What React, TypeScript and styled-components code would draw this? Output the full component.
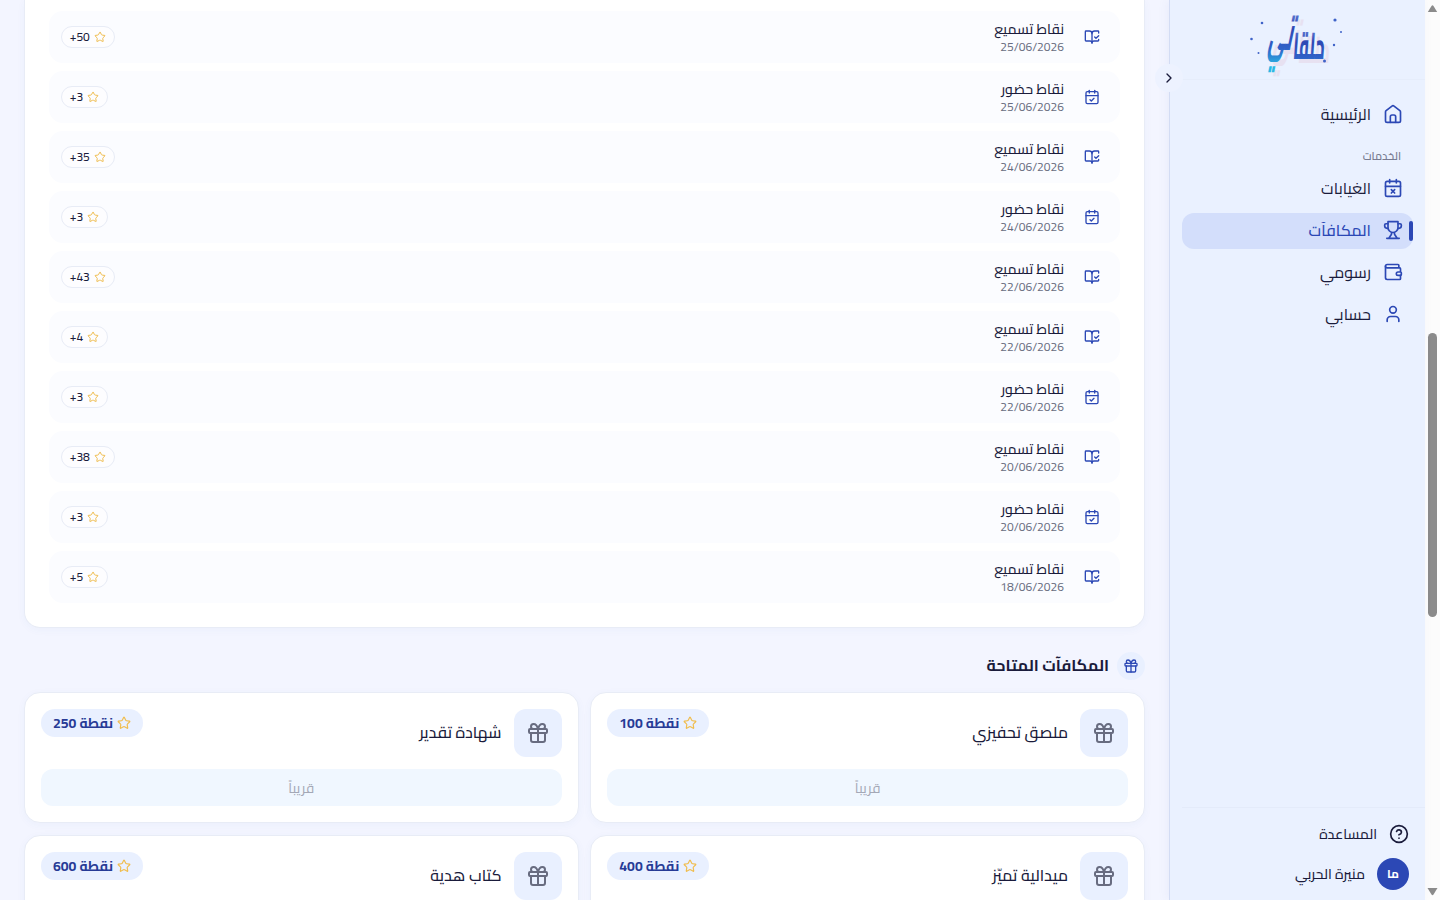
import React from 'react';
import styled, { createGlobalStyle } from 'styled-components';
import {
  BookOpenCheck, CalendarCheck, CalendarX, ChevronRight, CircleHelp, Gift, Star, User, Wallet,
} from 'lucide-react';

const ink = '#1a1b3b';
const primary = '#2c48b5';
const line = '#e8ecf6';

const GlobalStyle = createGlobalStyle`
  * { box-sizing: border-box; }
  body {
    margin: 0;
    overflow: hidden;
    color: ${ink};
    background: #f3f5ff;
    font-family: Cairo, "Noto Sans", "DejaVu Sans", sans-serif;
  }
`;

const Page = styled.div`
  display: flex;
  width: 1440px;
  height: 900px;
  overflow: hidden;
  white-space: nowrap;
`;

const Main = styled.main`
  width: 1169px;
  padding: 0 24px;
`;

const HistoryCard = styled.section`
  height: 628px;
  padding: 11px 24px 24px;
  display: flex;
  flex-direction: column;
  gap: 8px;
  background: #fff;
  border: 1px solid ${line};
  border-top: 0;
  border-radius: 0 0 16px 16px;
  box-shadow: 0 2px 8px rgba(60, 90, 180, 0.04);
`;

const HistoryRow = styled.div`
  height: 52px;
  flex: none;
  padding: 0 12px;
  display: flex;
  align-items: center;
  gap: 12px;
  border-radius: 14px;
  background: #fbfcff;
`;

const RowIcon = styled.span`
  width: 32px;
  height: 32px;
  display: grid;
  place-items: center;
  color: ${primary};
`;

const RowText = styled.div`
  flex: 1;
  display: flex;
  flex-direction: column;
`;

const RowTitle = styled.div`
  font-size: 14px;
  line-height: 19px;
  font-weight: 500;
`;

const RowDate = styled.div`
  font-size: 12px;
  line-height: 16px;
  color: #686c80;
`;

const PointsPill = styled.span`
  height: 22px;
  padding: 0 7.7px;
  display: flex;
  align-items: center;
  gap: 4px;
  border: 1px solid ${line};
  border-radius: 11px;
  font-size: 12px;
  line-height: 20px;
  font-weight: 500;
  background: #fdfdff;
  svg { color: #f0bd4e; }
`;

const SectionHeader = styled.header`
  height: 28px;
  margin: 24px 0 12px;
  display: flex;
  align-items: center;
  gap: 8px;
`;

const SectionIcon = styled.span`
  width: 28px;
  height: 28px;
  display: grid;
  place-items: center;
  border-radius: 50%;
  color: ${primary};
  background: #e9f0ff;
`;

const SectionTitle = styled.h2`
  margin: 0 0 2px;
  font-size: 16px;
  line-height: 26px;
  font-weight: 700;
`;

const RewardGrid = styled.section`
  display: grid;
  grid-template-columns: 554.7px 554.5px;
  gap: 12px 11.8px;
`;

const RewardCard = styled.article`
  height: 131.4px;
  padding: 16px;
  border: 1px solid ${line};
  border-radius: 16px;
  background: #fff;
  box-shadow: 0 2px 8px rgba(60, 90, 180, 0.04);
`;

const RewardTop = styled.div`
  height: 48px;
  display: flex;
  align-items: flex-start;
  gap: 12px;
`;

const RewardIcon = styled.span`
  width: 48px;
  height: 48px;
  display: grid;
  place-items: center;
  border-radius: 12px;
  color: #686c80;
  background: #e9f0ff;
`;

const RewardName = styled.div`
  flex: 1;
  font-size: 16px;
  line-height: 47.4px;
  font-weight: 500;
`;

const CostPill = styled.span`
  height: 28px;
  padding: 0 12px;
  display: flex;
  align-items: center;
  gap: 3.5px;
  border-radius: 14px;
  font-size: 14px;
  line-height: 28px;
  font-weight: 700;
  color: #273b96;
  background: #e9f0ff;
  svg {
    margin-bottom: 1px;
    color: #f0bd4e;
  }
`;

const SoonButton = styled.button`
  width: 100%;
  height: 37.4px;
  margin-top: 12px;
  padding: 0;
  border: 0;
  border-radius: 12px;
  font: inherit;
  font-size: 14px;
  color: #a4a8b6;
  background: #f0f7ff;
`;

const Sidebar = styled.aside`
  position: relative;
  width: 256px;
  display: flex;
  flex-direction: column;
  border-left: 1px solid #d3dcf4;
  background: #eaf1ff;
  box-shadow: -2px 0 10px rgba(60, 90, 180, 0.06);
`;

const Brand = styled.div`
  height: 80px;
  margin-left: 12px;
  padding-right: 75px;
  border-bottom: 1px solid #e6edfb;
`;

const Toggle = styled.button`
  position: absolute;
  left: -15px;
  top: 64px;
  width: 28px;
  height: 28px;
  padding: 0;
  display: grid;
  place-items: center;
  border: 0;
  border-radius: 50%;
  color: ${ink};
  background: #edf2ff;
`;

const Nav = styled.nav`
  flex: 1;
  padding: 16px 12px;
  display: flex;
  flex-direction: column;
  gap: 6px;
`;

const NavItem = styled.a<{ $active?: boolean }>`
  position: relative;
  height: 36px;
  padding: 0 10px 1px;
  display: flex;
  align-items: center;
  gap: 12px;
  border-radius: 12px;
  font-size: 16px;
  font-weight: ${(p) => (p.$active ? 500 : 400)};
  color: ${(p) => (p.$active ? primary : ink)};
  background: ${(p) => (p.$active ? '#d3defb' : 'transparent')};
  svg { color: ${primary}; }
  &:first-child { padding-bottom: 0; }
`;

const ActiveMark = styled.span`
  position: absolute;
  right: 0;
  top: 8px;
  width: 4px;
  height: 20px;
  border-radius: 2px;
  background: ${primary};
`;

const NavHeading = styled.div`
  height: 26.5px;
  padding: 0 12px;
  font-size: 11px;
  line-height: 37px;
  font-weight: 600;
  color: #777b90;
`;

const SideFooter = styled.footer`
  height: 93px;
  margin-left: 12px;
  padding: 10px 16px;
  display: flex;
  flex-direction: column;
  gap: 8px;
  border-top: 1px solid #e4ebfa;
  font-size: 14px;
`;

const FooterItem = styled.div`
  flex: none;
  height: 32px;
  display: flex;
  align-items: center;
  gap: 12px;
  font-weight: 500;
`;

const Avatar = styled.span`
  width: 32px;
  height: 32px;
  display: grid;
  place-items: center;
  border-radius: 50%;
  font-size: 12px;
  line-height: 16px;
  font-weight: 700;
  color: #fff;
  background: ${primary};
`;

const Scrollbar = styled.div`
  width: 15px;
  display: flex;
  flex-direction: column;
  align-items: center;
  background: #fcfcfc;
`;

const ScrollThumb = styled.div`
  width: 9px;
  height: 284px;
  margin: 321px 0 267px;
  border-radius: 5px;
  background: #8b8b8b;
`;

const LineIcon = styled.svg.attrs({
  width: 20,
  height: 20,
  viewBox: '0 0 24 24',
  fill: 'none',
  stroke: 'currentColor',
  strokeWidth: 2,
  strokeLinecap: 'round',
  strokeLinejoin: 'round',
})``;

const HomeIcon = () => (
  <LineIcon>
    <path d="M3 9.600a2 2 0 0 1 .75-1.560l7-5.500a2 2 0 0 1 2.500 0l7 5.500A2 2 0 0 1 21 9.600V20a2 2 0 0 1-2 2H5a2 2 0 0 1-2-2z" />
    <path d="M8.800 22v-6.800a2 2 0 0 1 2-2h2.400a2 2 0 0 1 2 2V22" />
  </LineIcon>
);

const TrophyIcon = () => (
  <LineIcon>
    <path d="M6 2h12v7a6 6 0 0 1-12 0z" />
    <path d="M6 4.500H3.500a1.500 1.500 0 0 0-1.500 1.500v1a3 3 0 0 0 3 3h1" />
    <path d="M18 4.500h2.500A1.500 1.500 0 0 1 22 6v1a3 3 0 0 1-3 3h-1" />
    <path d="M10.500 15 10 17.500 7 22M13.500 15l.5 2.500 3 4.500M4.500 22h15" />
  </LineIcon>
);

/* Slanted word mark: the last two letters stand taller than the rest. */
const WordMark = ({ fill }: { fill: string }) => (
  <g fill={fill} fontWeight="800" direction="rtl">
    <text transform="translate(80 59) skewX(-4) scale(0.53 1.250)" fontSize="30">حلقا</text>
    <text transform="translate(47 50) skewX(-12) scale(0.58 1.600)" fontSize="30">تي</text>
  </g>
);

function Logo() {
  return (
    <svg width="106" height="79" viewBox="0 0 106 79">
      <defs>
        <linearGradient id="brand" gradientUnits="userSpaceOnUse" x1="0" y1="-26" x2="0" y2="10">
          <stop offset="0" stopColor="#6a86da" />
          <stop offset="0.35" stopColor="#2f48b4" />
          <stop offset="0.7" stopColor="#2f62c8" />
          <stop offset="1" stopColor="#2bb8e4" />
        </linearGradient>
      </defs>
      <g transform="translate(5 4)" opacity="0.5"><WordMark fill="#e6d3e4" /></g>
      <WordMark fill="url(#brand)" />
      <g fill="#3f63c8">
        <circle cx="18" cy="23" r="1.300" />
        <circle cx="7.500" cy="39" r="1.300" />
        <circle cx="14.500" cy="53" r="1" />
        <circle cx="91" cy="20" r="1.600" />
        <circle cx="97" cy="32" r="1" />
        <circle cx="90" cy="45" r="1.200" />
        <circle cx="80.500" cy="61" r="1.500" />
      </g>
    </svg>
  );
}

const history = [
  { kind: 'recite', date: '25/06/2026', points: '+50' },
  { kind: 'attend', date: '25/06/2026', points: '+3' },
  { kind: 'recite', date: '24/06/2026', points: '+35' },
  { kind: 'attend', date: '24/06/2026', points: '+3' },
  { kind: 'recite', date: '22/06/2026', points: '+43' },
  { kind: 'recite', date: '22/06/2026', points: '+4' },
  { kind: 'attend', date: '22/06/2026', points: '+3' },
  { kind: 'recite', date: '20/06/2026', points: '+38' },
  { kind: 'attend', date: '20/06/2026', points: '+3' },
  { kind: 'recite', date: '18/06/2026', points: '+5' },
];

const rewards = [
  { name: 'ملصق تحفيزي', cost: 100 },
  { name: 'شهادة تقدير', cost: 250 },
  { name: 'ميدالية تميّز', cost: 400 },
  { name: 'كتاب هدية', cost: 600 },
];

export default function App() {
  return (
    <Page dir="rtl">
      <GlobalStyle />
      <Scrollbar>
        <svg width="15" height="12" viewBox="0 0 15 12"><path d="M2.500 12.500 6.500 6Q7.500 4.500 8.500 6L12.500 12.500z" fill="#8b8b8b" /></svg>
        <ScrollThumb />
        <svg width="15" height="12" viewBox="0 0 15 12"><path d="M2.500 4h10L8.500 10.500Q7.500 12 6.500 10.500z" fill="#8b8b8b" /></svg>
      </Scrollbar>
      <Sidebar>
        <Brand><Logo /></Brand>
        <Toggle><ChevronRight size={16} /></Toggle>
        <Nav>
          <NavItem><HomeIcon />الرئيسية</NavItem>
          <NavHeading>الخدمات</NavHeading>
          <NavItem><CalendarX size={20} />الغيابات</NavItem>
          <NavItem $active><ActiveMark /><TrophyIcon />المكافآت</NavItem>
          <NavItem><Wallet size={20} />رسومي</NavItem>
          <NavItem><User size={20} />حسابي</NavItem>
        </Nav>
        <SideFooter>
          <FooterItem><CircleHelp size={20} />المساعدة</FooterItem>
          <FooterItem><Avatar>ما</Avatar>منيرة الحربي</FooterItem>
        </SideFooter>
      </Sidebar>
      <Main>
        <HistoryCard>
          {history.map(({ kind, date, points }, i) => (
            <HistoryRow key={i}>
              <RowIcon>{kind === 'recite' ? <BookOpenCheck size={16} /> : <CalendarCheck size={16} />}</RowIcon>
              <RowText>
                <RowTitle>{kind === 'recite' ? 'نقاط تسميع' : 'نقاط حضور'}</RowTitle>
                <RowDate>{date}</RowDate>
              </RowText>
              <PointsPill><Star size={12} /><bdi dir="ltr">{points}</bdi></PointsPill>
            </HistoryRow>
          ))}
        </HistoryCard>
        <SectionHeader>
          <SectionIcon><Gift size={16} /></SectionIcon>
          <SectionTitle>المكافآت المتاحة</SectionTitle>
        </SectionHeader>
        <RewardGrid>
          {rewards.map((r) => (
            <RewardCard key={r.name}>
              <RewardTop>
                <RewardIcon><Gift size={24} /></RewardIcon>
                <RewardName>{r.name}</RewardName>
                <CostPill><Star size={14} /><span>نقطة {r.cost}</span></CostPill>
              </RewardTop>
              <SoonButton>قريباً</SoonButton>
            </RewardCard>
          ))}
        </RewardGrid>
      </Main>
    </Page>
  );
}
